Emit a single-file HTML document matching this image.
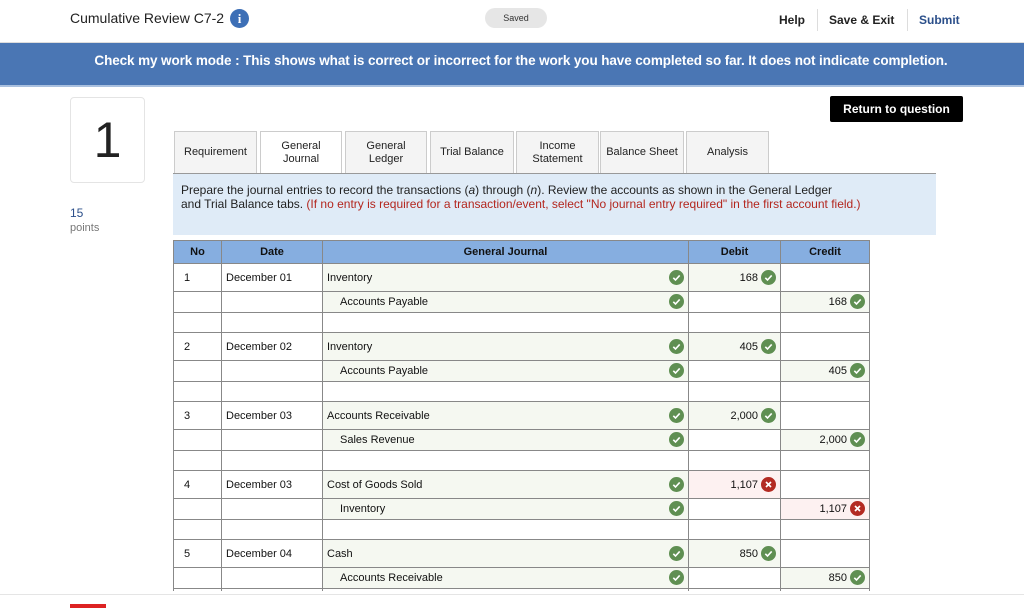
<!DOCTYPE html>
<html><head><meta charset="utf-8"><style>
body{margin:0;width:1024px;height:608px;overflow:hidden;background:#fff;font-family:"Liberation Sans",sans-serif;position:relative}
.abs{position:absolute}
.hdr{top:0;left:0;width:1024px;height:42px;background:#fff;border-bottom:1px solid #ddd}
.banner{top:43px;left:0;width:1024px;height:44px;background:#4a76b4;color:#fff;font-weight:bold;font-size:13.5px;text-align:center;line-height:35px;border-bottom:2px solid #a9c0df;padding-left:18px;box-sizing:border-box;letter-spacing:-0.1px}
.tab{position:absolute;top:131px;height:42px;background:#f4f4f4;border:1px solid #ccc;border-bottom:none;font-size:11px;color:#222;display:flex;align-items:center;justify-content:center;text-align:center;line-height:13px;box-sizing:border-box}
.wrap{left:173px;top:240px;width:698px;height:351px;overflow:hidden}
table{border-collapse:collapse;table-layout:fixed;width:696px;font-size:11px;color:#111}
td,th{border:1px solid #888;padding:0 4px;white-space:nowrap}
th{background:#86aee0;height:22px;font-size:11px}
tr.a td{height:27px}tr.b td{height:20px}tr.c td{height:19px}
td.n{padding-left:10px}
.ok{background:#f5f8f1}.bad{background:#fdf1f1}
.r{text-align:right;padding-right:22px;position:relative}
.g{position:relative}
.i{position:absolute;width:15px;height:15px;border-radius:50%;top:50%;margin-top:-8px;right:4px}
.i.c{background:#5f8f52}.i.x{background:#b32a22}
.i svg{position:absolute;left:0;top:0}
</style></head><body>
<div class="abs hdr"></div>
<div class="abs" style="left:70px;top:10px;font-size:14px;color:#222">Cumulative Review C7-2</div>
<div class="abs" style="left:230px;top:9px;width:19px;height:19px;border-radius:50%;background:#3d6fb6;color:#fff;font-weight:bold;font-size:13px;text-align:center;line-height:19px;font-family:'Liberation Serif',serif">i</div>
<div class="abs" style="left:485px;top:8px;width:62px;height:20px;border-radius:10px;background:#e6e6e6;font-size:9px;color:#333;text-align:center;line-height:20px">Saved</div>
<div class="abs" style="left:779px;top:13px;font-size:12px;font-weight:bold;color:#222">Help</div>
<div class="abs" style="left:817px;top:9px;width:1px;height:22px;background:#ddd"></div>
<div class="abs" style="left:829px;top:13px;font-size:12px;font-weight:bold;color:#222">Save &amp; Exit</div>
<div class="abs" style="left:907px;top:9px;width:1px;height:22px;background:#ddd"></div>
<div class="abs" style="left:919px;top:13px;font-size:12px;font-weight:bold;color:#2b4f8a">Submit</div>
<div class="abs banner">Check my work mode : This shows what is correct or incorrect for the work you have completed so far. It does not indicate completion.</div>
<div class="abs" style="left:70px;top:97px;width:73px;height:84px;border:1px solid #e4e4e4;border-radius:4px;font-size:50px;text-align:center;line-height:84px;color:#222">1</div>
<div class="abs" style="left:70px;top:206px;font-size:12px;color:#2b4f8a">15</div>
<div class="abs" style="left:70px;top:222px;font-size:11px;color:#777">points</div>
<div class="abs" style="left:830px;top:96px;width:133px;height:26px;background:#000;color:#fff;font-weight:bold;font-size:12px;text-align:center;line-height:26px;border-radius:2px">Return to question</div>
<div class="tab" style="left:174px;width:83px">Requirement</div>
<div class="tab" style="left:260px;width:82px;background:#fff;height:43px">General<br>Journal</div>
<div class="tab" style="left:345px;width:82px">General<br>Ledger</div>
<div class="tab" style="left:430px;width:84px">Trial Balance</div>
<div class="tab" style="left:516px;width:83px">Income<br>Statement</div>
<div class="tab" style="left:600px;width:84px">Balance Sheet</div>
<div class="tab" style="left:686px;width:83px">Analysis</div>
<div class="abs" style="left:173px;top:173px;width:763px;height:62px;background:#dfebf7;border-top:1px solid #999;font-size:12px;line-height:14px;color:#222;padding:9px 0 0 8px;box-sizing:border-box"><div style="width:720px">Prepare the journal entries to record the transactions (<i>a</i>) through (<i>n</i>). Review the accounts as shown in the General Ledger<br>and Trial Balance tabs. <span style="color:#b3261e">(If no entry is required for a transaction/event, select "No journal entry required" in the first account field.)</span></div></div>
<div class="abs wrap"><table>
<colgroup><col style="width:48px"><col style="width:101px"><col style="width:366px"><col style="width:92px"><col style="width:89px"></colgroup>
<tr><th>No</th><th>Date</th><th>General Journal</th><th>Debit</th><th>Credit</th></tr>
<tbody id="b"></tbody>
</table></div>
<div class="abs" style="left:0;top:594px;width:1024px;height:1px;background:#e5e5e5"></div>
<div class="abs" style="left:70px;top:604px;width:36px;height:4px;background:#d22"></div>
<script>
var C='<span class="i c"><svg width="15" height="15"><path d="M4.3 7.8l2.2 2.2 4.2-4.6" stroke="#fff" stroke-width="1.6" fill="none"/></svg></span>';
var X='<span class="i x"><svg width="15" height="15"><path d="M5 5l5 5M10 5l-5 5" stroke="#fff" stroke-width="1.7"/></svg></span>';
var E=[["1","December 01","Inventory","Accounts Payable","168",1],["2","December 02","Inventory","Accounts Payable","405",1],["3","December 03","Accounts Receivable","Sales Revenue","2,000",1],["4","December 03","Cost of Goods Sold","Inventory","1,107",0],["5","December 04","Cash","Accounts Receivable","850",1]];
var h="";E.forEach(function(e){var ic=e[5]?C:X,cl=e[5]?"ok":"bad";
h+='<tr class="a"><td class="n">'+e[0]+'</td><td>'+e[1]+'</td><td class="ok g">'+e[2]+C+'</td><td class="'+cl+' r">'+e[4]+ic+'</td><td></td></tr>';
h+='<tr class="b"><td></td><td></td><td class="ok g" style="padding-left:17px">'+e[3]+C+'</td><td></td><td class="'+cl+' r">'+e[4]+ic+'</td></tr>';
h+='<tr class="c"><td></td><td></td><td></td><td></td><td></td></tr>';});
document.getElementById("b").innerHTML=h;
</script>
</body></html>
